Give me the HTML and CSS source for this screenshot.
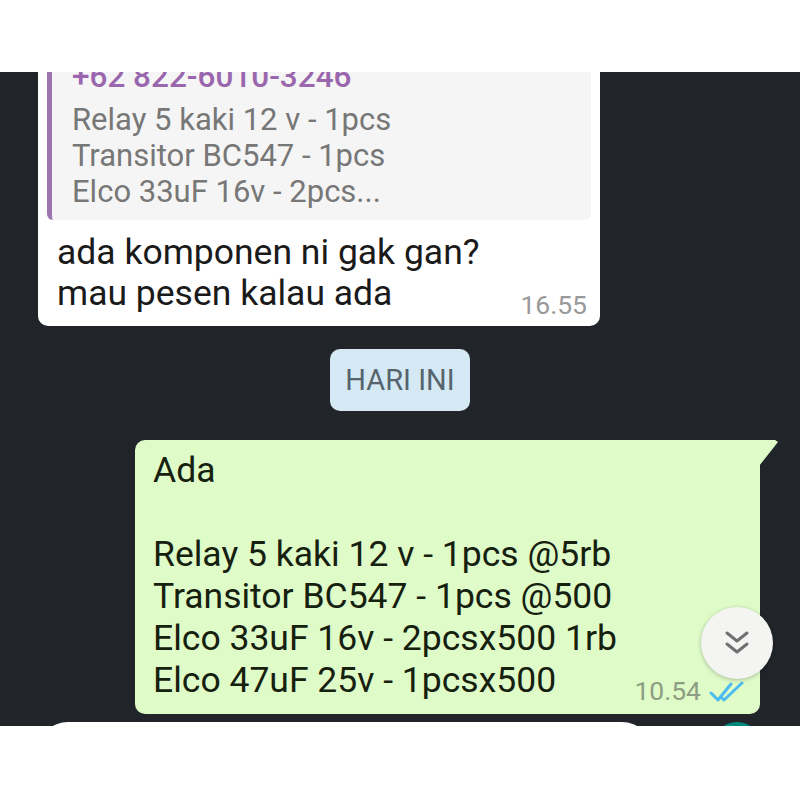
FILE: index.html
```html
<!DOCTYPE html>
<html lang="id">
<head>
    <meta charset="UTF-8">
    <meta name="viewport" content="width=device-width, initial-scale=1.0">
    <title>Chat</title>
    <link rel="stylesheet" href="styles.css">
</head>
<body>
    <header class="top-bar"></header>

    <main class="chat">
        <!-- Incoming message with reply quote -->
        <div class="msg msg-in">
            <div class="quote">
                <div class="quote-name">+62 822-6010-3246</div>
                <div class="quote-text">Relay 5 kaki 12 v - 1pcs<br>Transitor BC547 - 1pcs<br>Elco 33uF 16v - 2pcs...</div>
            </div>
            <div class="msg-text">ada komponen ni gak gan?<br>mau pesen kalau ada</div>
            <div class="meta"><span class="time">16.55</span></div>
        </div>

        <div class="date-chip">HARI INI</div>

        <!-- Outgoing message -->
        <div class="msg msg-out">
            <div class="msg-text">Ada<br><br>Relay 5 kaki 12 v - 1pcs @5rb<br>Transitor BC547 - 1pcs @500<br>Elco 33uF 16v - 2pcsx500 1rb<br>Elco 47uF 25v - 1pcsx500</div>
            <div class="meta">
                <span class="time">10.54</span>
                <svg class="ticks" width="36" height="22" viewBox="0 0 36 22">
                    <path d="M2 12 L9 19 L22 3" fill="none" stroke="#4cbcef" stroke-width="3" stroke-linecap="round" stroke-linejoin="round"/>
                    <path d="M13 17 L15 19 L33 2" fill="none" stroke="#4cbcef" stroke-width="3" stroke-linecap="round" stroke-linejoin="round"/>
                </svg>
            </div>
        </div>

        <div class="composer">
            <div class="input-pill"></div>
            <div class="send-btn"></div>
        </div>

        <!-- Scroll to bottom button -->
        <div class="scroll-btn">
            <svg width="28" height="28" viewBox="0 0 28 28">
                <path d="M4 4 L14 12 L24 4" fill="none" stroke="#707070" stroke-width="3" stroke-linecap="round" stroke-linejoin="round"/>
                <path d="M4 15 L14 23 L24 15" fill="none" stroke="#707070" stroke-width="3" stroke-linecap="round" stroke-linejoin="round"/>
            </svg>
        </div>
    </main>

    <footer class="bottom-bar"></footer>
</body>
</html>
```

FILE: styles.css
```css
/* General Reset */
* {
    margin: 0;
    padding: 0;
    box-sizing: border-box;
}

body {
    font-family: Roboto, "Liberation Sans", sans-serif;
    background-color: #fff;
    width: 800px;
}

/* Top / bottom white bars */
.top-bar {
    height: 72px;
    background-color: #fff;
}

.bottom-bar {
    height: 74px;
    background-color: #fff;
}

/* Chat area */
.chat {
    position: relative;
    height: 654px;
    background-color: #212428;
    overflow: hidden;
    display: flex;
    flex-direction: column;
    align-items: flex-start;
}

.msg {
    position: relative;
    border-radius: 10px;
}

/* Incoming bubble */
.msg-in {
    margin-top: -30px;
    margin-left: 38px;
    width: 562px;
    background-color: #fff;
    padding: 9px 9px 6px 9px;
}

.quote {
    background-color: #f5f5f5;
    border-left: 5px solid #9d74b0;
    border-radius: 6px;
    padding: 8px 20px 10px 20px;
}

.quote-name {
    font-size: 31.5px;
    line-height: 36px;
    font-weight: 500;
    color: #9a66ad;
    margin-bottom: 7px;
}

.quote-text {
    font-size: 31px;
    line-height: 36px;
    color: #777;
}

.msg-in .msg-text {
    margin-top: 12px;
    padding-left: 10px;
    font-size: 35.5px;
    line-height: 41px;
    color: #1a1a1a;
}

.meta {
    display: flex;
    justify-content: flex-end;
    align-items: center;
    gap: 8px;
    height: 30px;
    margin-top: -24px;
}

.time {
    font-size: 26.5px;
    line-height: 30px;
    color: #999;
}

.msg-in .meta {
    margin-right: 4px;
}

/* Date chip */
.date-chip {
    align-self: center;
    margin: 23px 0 29px;
    width: 140px;
    height: 62px;
    line-height: 62px;
    text-align: center;
    background-color: #d4e9f4;
    border-radius: 10px;
    font-size: 29px;
    color: #56646e;
}

/* Outgoing bubble */
.msg-out {
    margin-left: 135px;
    width: 625px;
    background-color: #dffbc8;
    border-top-right-radius: 0;
    padding: 9px 15px 8px 18px;
}

.msg-out::after {
    content: "";
    position: absolute;
    top: 0;
    right: -18px;
    width: 19px;
    height: 26px;
    background-color: #dffbc8;
    clip-path: polygon(0 0, 85% 0, 100% 8%, 0 100%);
}

.msg-out .msg-text {
    font-size: 35.5px;
    line-height: 42px;
    color: #16200f;
}

.msg-out .meta {
    margin-top: -25px;
}

.msg-out .time {
    color: #8d9d82;
}

.ticks {
    margin-top: 2px;
}

/* Composer peeking at the bottom */
.composer {
    display: flex;
    margin-top: 8px;
}

.input-pill {
    margin-left: 38px;
    width: 614px;
    height: 60px;
    border-radius: 30px;
    background-color: #fff;
}

.send-btn {
    margin-left: 61px;
    width: 48px;
    height: 48px;
    border-radius: 50%;
    background-color: #00897b;
}

/* Scroll-down button */
.scroll-btn {
    position: absolute;
    top: 535px;
    left: 701px;
    width: 72px;
    height: 72px;
    border-radius: 50%;
    background-color: #f4f5f2;
    box-shadow: 0 1px 4px rgba(0, 0, 0, 0.25);
    display: flex;
    align-items: center;
    justify-content: center;
}
```
